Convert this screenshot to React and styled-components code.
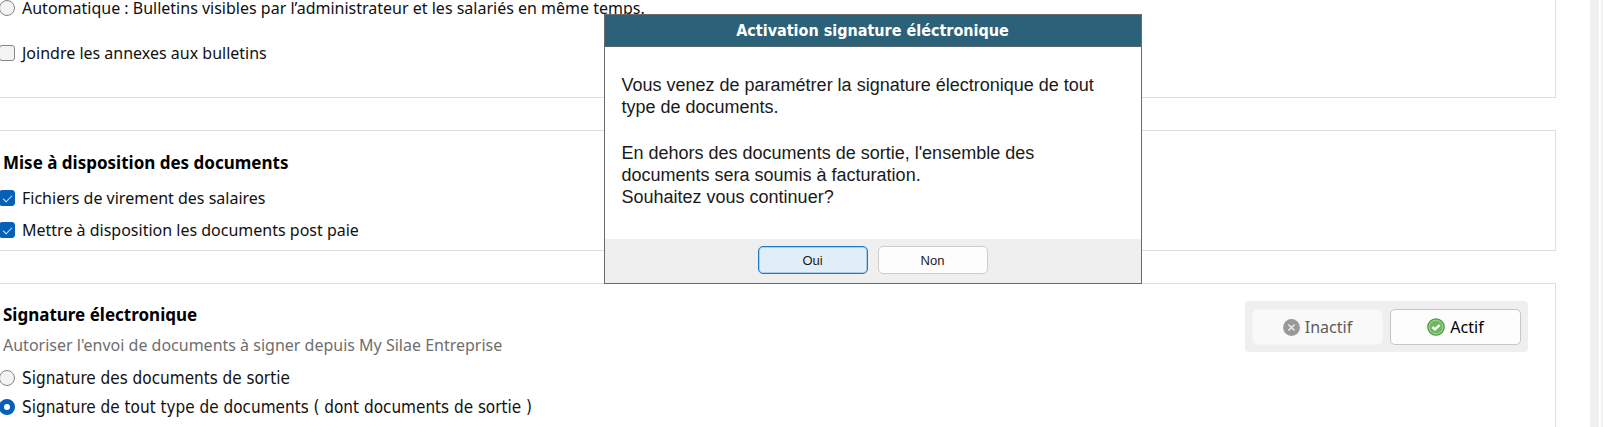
import React from "react";
import styled, { createGlobalStyle } from "styled-components";

const GlobalStyle = createGlobalStyle`
  *, *::before, *::after { box-sizing: border-box; }
  body {
    margin: 0;
    background: #fff;
    color: #111;
    font-family: "DejaVu Sans Condensed", "DejaVu Sans", Tahoma, sans-serif;
    font-size: 17px;
    overflow: hidden;
  }
`;

const Page = styled.div`
  position: relative;
  display: flex;
  height: 100vh;
  overflow: hidden;
`;

const Content = styled.main`
  flex: 1;
  min-width: 0;
  display: flex;
  flex-direction: column;
  gap: 32px;
  padding-right: 34px;
`;

const Gutter = styled.div`
  width: 13px;
  border-left: 9px solid #f0f0f0;
  border-right: 2px solid #f2f2f2;
`;

const Panel = styled.section`
  display: flex;
  flex-direction: column;
  flex: ${(p) => (p.$grow ? "1 0 auto" : "none")};
  border: 1px solid #dedede;
  border-left: 0;
  border-top-width: ${(p) => (p.$open ? 0 : "1px")};
  border-bottom-width: ${(p) => (p.$grow ? 0 : "1px")};
`;

const BulletinPanel = styled(Panel)`
  gap: 25px;
  padding-bottom: 32px;
`;

const DocumentsPanel = styled(Panel)`
  gap: 8px;
  padding: 20px 0 8px;
`;

const SignaturePanel = styled(Panel)`
  flex-direction: row;
  justify-content: space-between;
  align-items: flex-start;
  padding: 17px 27px 0 0;
`;

const SignatureOptions = styled.div`
  display: flex;
  flex-direction: column;
  gap: 7px;
  padding-top: 2px;
`;

const Heading = styled.h2`
  margin: 0;
  padding: 0 0 ${(p) => (p.$spaced ? 3 : 0)}px 3px;
  font: bold 17px/24px "Noto Sans", sans-serif;
  color: #000;
`;

const Hint = styled.p`
  margin: 0;
  padding: 0 0 4px 3px;
  font: 16px/22px "Noto Sans", sans-serif;
  color: #6e6e6e;
`;

const optionHeights = { flush: 16, tight: 22, normal: 24 };

const Option = styled.label`
  display: flex;
  align-items: center;
  gap: 7px;
  height: ${(p) => optionHeights[p.$size || "normal"]}px;
  white-space: nowrap;
  ${(p) => p.$size !== "tight" && `font: 16px/22px "Noto Sans", sans-serif;`}
`;

const OptionInput = styled.input`
  appearance: none;
  flex: none;
  display: grid;
  place-items: center;
  width: 16px;
  height: 16px;
  margin: 0 0 0 -1px;
  border: 1px solid #868686;
  background: #f3f3f3;
`;

const Radio = styled(OptionInput).attrs({ type: "radio" })`
  border-radius: 50%;
  &:checked {
    border: 5px solid #0560b6;
    background: #fff;
  }
`;

const Checkbox = styled(OptionInput).attrs({ type: "checkbox" })`
  border-radius: 3px;
  &:checked {
    border-color: #0560b6;
    background: #0560b6;
  }
  &:checked::before {
    content: "";
    width: 9px;
    height: 5px;
    border: solid #d5e5f5;
    border-width: 0 0 1px 1px;
    transform: translateY(-1px) rotate(-45deg);
  }
`;

const Switcher = styled.div`
  display: flex;
  gap: 7px;
  padding: 8px 7px 7px;
  border-radius: 4px;
  background: #efefef;
`;

const SwitchButton = styled.button`
  display: flex;
  align-items: center;
  justify-content: center;
  gap: 5px;
  width: 131px;
  height: 36px;
  padding: 0;
  border: 1px solid ${(p) => (p.$active ? "#c6c6c6" : "#f4f4f4")};
  border-radius: 5px;
  background: ${(p) => (p.$active ? "#fdfdfd" : "#f9f9f9")};
  color: ${(p) => (p.$active ? "#000" : "#5c5c5c")};
  font: 16px/24px "Noto Sans", sans-serif;
`;

const Dialog = styled.div`
  position: absolute;
  top: 14px;
  left: calc(50% - 198px);
  width: 538px;
  border: 1px solid #6a6a6a;
  background: #fff;
`;

const DialogTitle = styled.h1`
  margin: 0;
  border-bottom: 1px solid #56656b;
  background: #2c6279;
  color: #fff;
  font-size: 16px;
  font-weight: bold;
  line-height: 31px;
  text-align: center;
`;

const DialogBody = styled.div`
  padding: 27px 17px 31px;
  color: #1a1a1a;
  font: 18px/22px "Liberation Sans", Arial, sans-serif;
`;

const Paragraph = styled.p`
  margin: 0 0 ${(p) => (p.$last ? 0 : 24)}px;
`;

const DialogFooter = styled.div`
  display: flex;
  justify-content: center;
  gap: 10px;
  padding: 7px 0 9px;
  background: #efefef;
`;

const DialogButton = styled.button`
  width: 110px;
  height: 28px;
  padding: 0;
  border: 1px solid ${(p) => (p.$primary ? "#1f78c4" : "#cdcdcd")};
  border-radius: 5px;
  box-shadow: ${(p) => (p.$primary ? "inset 0 0 0 1px #a9cdea" : "none")};
  background: ${(p) => (p.$primary ? "#e0eef9" : "#fdfdfd")};
  color: #1a1a1a;
  font: 13px "Liberation Sans", Arial, sans-serif;
`;

function CrossIcon() {
  return (
    <svg width="17" height="17" viewBox="0 0 17 17" aria-hidden="true">
      <circle cx="8.5" cy="8.5" r="8.4" fill="#999" />
      <path d="M5.4 5.4l6.2 6.2M11.6 5.4l-6.2 6.2" stroke="#f0f0f0" strokeWidth="1.4" />
    </svg>
  );
}

function CheckIcon() {
  return (
    <svg width="18" height="18" viewBox="0 0 18 18" aria-hidden="true">
      <circle cx="9" cy="9" r="8.2" fill="#6cb95f" stroke="#4f9647" strokeWidth="1.2" />
      <circle cx="9" cy="9" r="6.9" fill="none" stroke="#a5d89a" strokeWidth="1" />
      <path d="M5.4 9l2.6 2.4 4.6-4.4" fill="none" stroke="#fff" strokeWidth="2.4" />
    </svg>
  );
}

export default function App() {
  return (
    <>
      <GlobalStyle />
      <Page>
        <Content>
          <BulletinPanel $open>
            <Option $size="flush">
              <Radio name="bulletins" />
              Automatique : Bulletins visibles par l’administrateur et les salariés en même temps.
            </Option>
            <Option>
              <Checkbox />
              Joindre les annexes aux bulletins
            </Option>
          </BulletinPanel>

          <DocumentsPanel>
            <Heading $spaced>Mise à disposition des documents</Heading>
            <Option>
              <Checkbox defaultChecked />
              Fichiers de virement des salaires
            </Option>
            <Option>
              <Checkbox defaultChecked />
              Mettre à disposition les documents post paie
            </Option>
          </DocumentsPanel>

          <SignaturePanel $grow>
            <SignatureOptions>
              <Heading>Signature électronique</Heading>
              <Hint>Autoriser l'envoi de documents à signer depuis My Silae Entreprise</Hint>
              <Option $size="tight">
                <Radio name="signature" />
                Signature des documents de sortie
              </Option>
              <Option $size="tight">
                <Radio name="signature" defaultChecked />
                Signature de tout type de documents ( dont documents de sortie )
              </Option>
            </SignatureOptions>
            <Switcher>
              <SwitchButton type="button">
                <CrossIcon />
                Inactif
              </SwitchButton>
              <SwitchButton type="button" $active>
                <CheckIcon />
                Actif
              </SwitchButton>
            </Switcher>
          </SignaturePanel>
        </Content>
        <Gutter />

        <Dialog role="dialog" aria-labelledby="dialog-title">
          <DialogTitle id="dialog-title">Activation signature éléctronique</DialogTitle>
          <DialogBody>
            <Paragraph>
              Vous venez de paramétrer la signature électronique de tout
              <br />
              type de documents.
            </Paragraph>
            <Paragraph $last>
              En dehors des documents de sortie, l'ensemble des
              <br />
              documents sera soumis à facturation.
              <br />
              Souhaitez vous continuer?
            </Paragraph>
          </DialogBody>
          <DialogFooter>
            <DialogButton type="button" $primary>Oui</DialogButton>
            <DialogButton type="button">Non</DialogButton>
          </DialogFooter>
        </Dialog>
      </Page>
    </>
  );
}
